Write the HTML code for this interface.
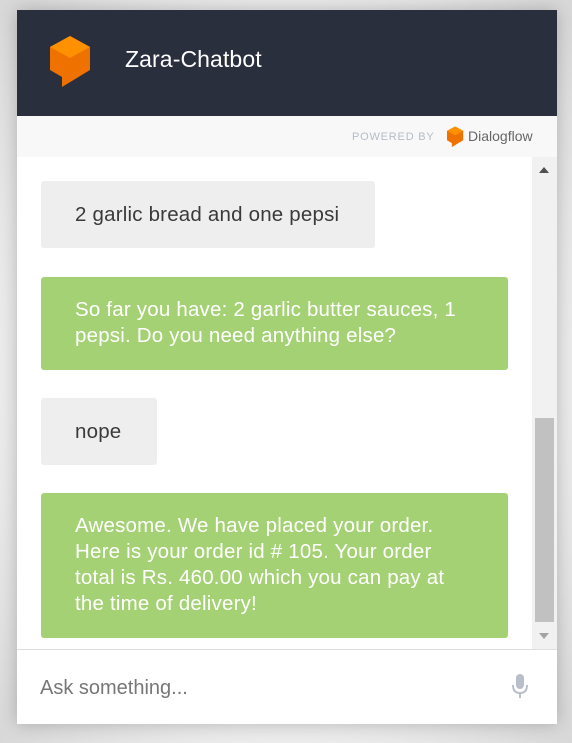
<!DOCTYPE html>
<html><head><style>
body{margin:0;width:572px;height:743px;background:radial-gradient(ellipse at center,#f4f4f4 60%,#d8d8d8 100%);font-family:"Liberation Sans",sans-serif;position:relative;overflow:hidden}
.box{position:absolute;left:17px;top:10px;width:540px;height:714px;background:#fff;box-shadow:0 0 18px rgba(0,0,0,.25)}
.hdr{position:absolute;left:0;top:0;width:540px;height:106px;background:#2a2f3e}
.title{position:absolute;left:108px;top:36px;color:#fff;font-size:23px;letter-spacing:.1px}
.pw{position:absolute;left:0;top:106px;width:540px;height:41px;background:#f8f8f8}
.pwt{position:absolute;left:335px;top:15px;font-size:11px;color:#b5bcc8;letter-spacing:.8px}
.df{position:absolute;left:451px;top:12px;font-size:14px;color:#666}
.msg{position:absolute;font-size:20.5px;line-height:26px;color:#3a3a3a;border-radius:3px;box-sizing:border-box;padding:0 34px;letter-spacing:.2px}
.u{background:#eeeeee}
.b{background:#a5d175;color:#fff;left:24px;width:467px}
.sb{position:absolute;left:515px;top:147px;width:25px;height:492px;background:#f1f1f1}
.th{position:absolute;left:3px;top:261px;width:19px;height:204px;background:#c1c1c1}
.inp{position:absolute;left:0;top:639px;width:540px;height:75px;border-top:1px solid #ddd}
.ph{position:absolute;left:23px;top:27px;font-size:20px;color:#777}
</style></head><body>
<div class="box">
<div class="hdr">
<svg style="position:absolute;left:33px;top:26px" width="42" height="52" viewBox="0 0 42 52"><path d="M20 0 L40 11 L40 34 L12 51 L12 41 L0 34 L0 11 Z" fill="#ef7100"/><path d="M20 0 L40 11 L20 22 L0 11 Z" fill="#ff9100"/></svg>
<div class="title">Zara-Chatbot</div></div>
<div class="pw"><div class="pwt">POWERED BY</div>
<svg style="position:absolute;left:430px;top:10px" width="17" height="22" viewBox="0 0 42 52"><path d="M20 0 L40 11 L40 34 L12 51 L12 41 L0 34 L0 11 Z" fill="#ef7100"/><path d="M20 0 L40 11 L20 22 L0 11 Z" fill="#ff9100"/></svg>
<div class="df">Dialogflow</div></div>
<div class="msg u" style="left:24px;top:171px;width:334px;height:67px;padding-top:21px">2 garlic bread and one pepsi</div>
<div class="msg b" style="top:267px;height:93px;padding-top:20px">So far you have: 2 garlic butter sauces, 1 pepsi. Do you need anything else?</div>
<div class="msg u" style="left:24px;top:388px;width:116px;height:67px;padding-top:21px">nope</div>
<div class="msg b" style="top:483px;height:145px;padding-top:20px">Awesome. We have placed your order. Here is your order id # 105. Your order total is Rs. 460.00 which you can pay at the time of delivery!</div>
<div class="sb"><div style="position:absolute;left:7px;top:10px;border:5px solid transparent;border-bottom:6px solid #505050;border-top:0"></div><div class="th"></div><div style="position:absolute;left:7px;top:476px;border:5px solid transparent;border-top:6px solid #a3a3a3;border-bottom:0"></div></div>
<div class="inp"><div class="ph">Ask something...</div>
<svg style="position:absolute;left:494px;top:24px" width="18" height="26" viewBox="0 0 18 26"><rect x="5" y="0" width="8" height="15" rx="4" fill="#b9bfca"/><path d="M2 11 Q2 19 9 19 Q16 19 16 11" stroke="#b9bfca" stroke-width="2" fill="none"/><rect x="8" y="19" width="2" height="5" fill="#b9bfca"/></svg></div>
</div>
</body></html>
